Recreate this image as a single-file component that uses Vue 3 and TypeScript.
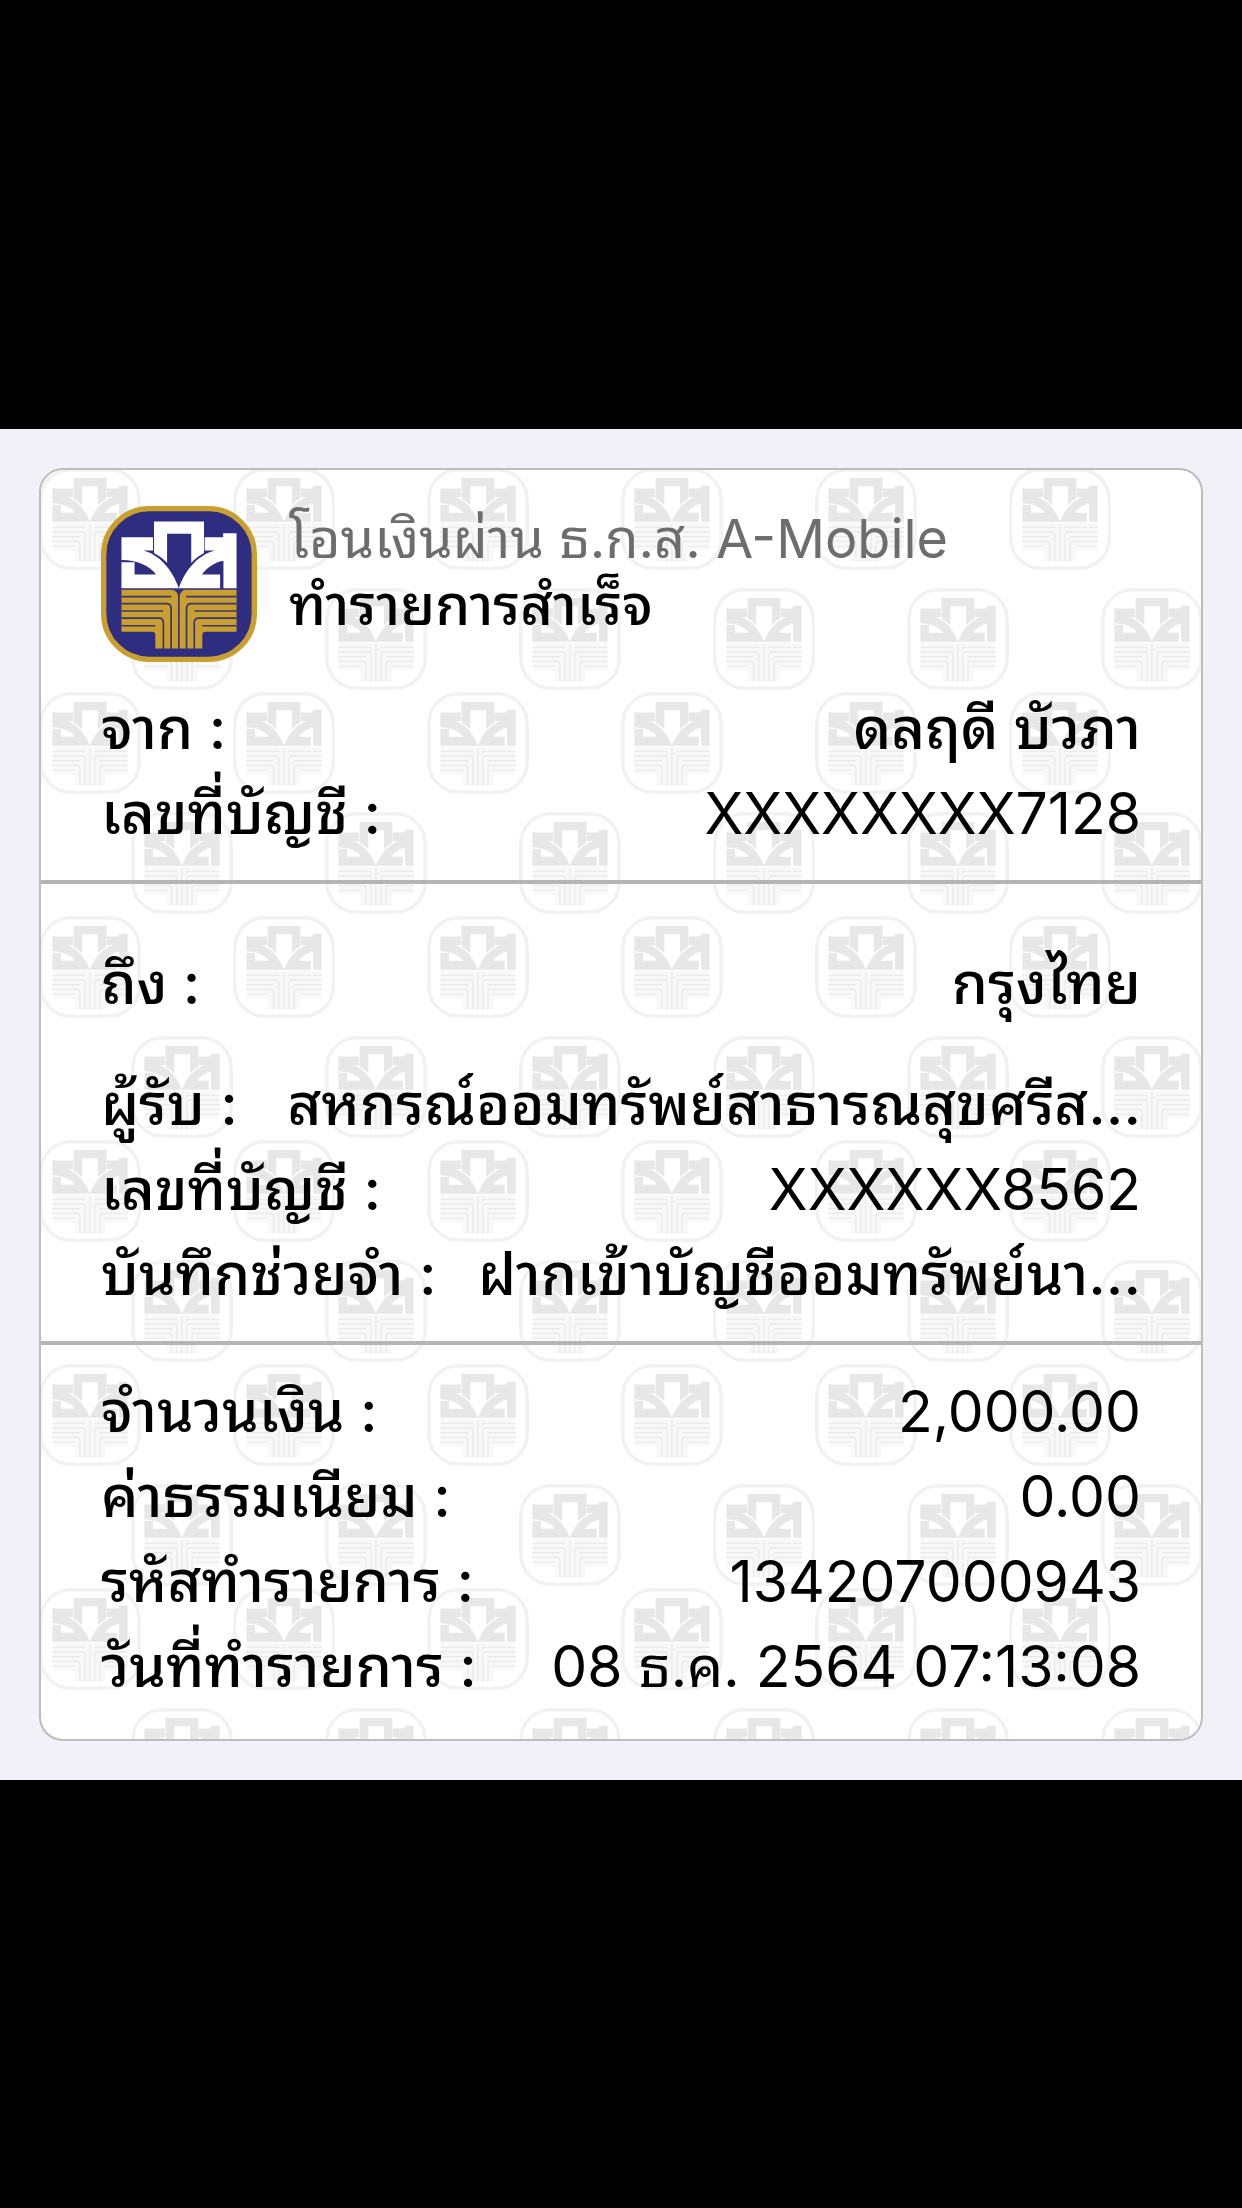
<script setup lang="ts">
interface Row {
  label: string
  value: string
  thai?: boolean
  spaced?: boolean
}

const sections: Row[][] = [
  [
    { label: 'จาก :', value: 'ดลฤดี บัวภา', thai: true },
    { label: 'เลขที่บัญชี :', value: 'XXXXXXXX7128' },
  ],
  [
    { label: 'ถึง :', value: 'กรุงไทย', thai: true, spaced: true },
    { label: 'ผู้รับ :', value: 'สหกรณ์ออมทรัพย์สาธารณสุขศรีส...', thai: true },
    { label: 'เลขที่บัญชี :', value: 'XXXXXX8562' },
    { label: 'บันทึกช่วยจำ :', value: 'ฝากเข้าบัญชีออมทรัพย์นา...', thai: true },
  ],
  [
    { label: 'จำนวนเงิน :', value: '2,000.00' },
    { label: 'ค่าธรรมเนียม :', value: '0.00' },
    { label: 'รหัสทำรายการ :', value: '134207000943' },
    { label: 'วันที่ทำรายการ :', value: '08 ธ.ค. 2564 07:13:08' },
  ],
]
</script>

<template>
  <main class="screen">
    <div class="panel">
      <article class="card">
        <svg class="watermark" aria-hidden="true">
          <defs>
            <symbol id="emblem" viewBox="0 0 465 465">
              <rect class="ring" x="8" y="8" width="449" height="449" rx="136" />
              <g transform="translate(-33 -47)">
                <path class="glyph" d="M94 140H188V180H160C205 192 245 235 265 292H94V215H133V251H197C178 224 140 209 94 208Z" />
                <path class="glyph" d="M342 140H397V128H437V292H398V210C368 215 345 235 334 251H388V292H265C285 235 325 192 372 180H342Z" />
                <path class="glyph" d="M191 93H340V187C325 195 312 205 302 217V130H230V217C220 205 206 195 191 187Z" />
                <path class="field" d="M230 216C245 235 258 258 265 285C272 258 287 235 302 216Z" />
                <path class="trunk" d="M94 297H437V422H345Q335 422 335 432V472H195V432Q195 422 185 422H94Z" />
                <path class="wedge" d="M244 296Q262 300 263 318H267Q268 300 286 296Z" />
                <path class="groove" d="M265 300V473M94 317H243M94 338H228Q242 338 242 353V473M94 360H218M94 381H206Q219 381 219 395V473M94 404H195M437 317H287M437 338H302Q288 338 288 353V473M437 360H312M437 381H324Q311 381 311 395V473M437 404H335" />
              </g>
            </symbol>
            <pattern id="tiles" x="-2" y="-2" width="194" height="224" patternUnits="userSpaceOnUse">
              <use href="#emblem" class="faint" x="0" y="0" width="102" height="102" />
              <use href="#emblem" class="faint" x="92" y="120" width="102" height="102" />
            </pattern>
          </defs>
          <rect width="100%" height="100%" fill="url(#tiles)" />
        </svg>

        <header class="head">
          <svg class="logo" role="img" aria-label="ธ.ก.ส."><use href="#emblem" width="100%" height="100%" /></svg>
          <div class="titles">
            <p class="via">โอนเงินผ่าน ธ.ก.ส. A-Mobile</p>
            <h1 class="status">ทำรายการสำเร็จ</h1>
          </div>
        </header>

        <dl v-for="(rows, i) in sections" :key="i" class="section">
          <div v-for="row in rows" :key="row.label" class="row" :class="{ spaced: row.spaced }">
            <dt>{{ row.label }}</dt>
            <dd :class="{ thai: row.thai }">{{ row.value }}</dd>
          </div>
        </dl>
      </article>
    </div>
  </main>
</template>

<style>
body {
  margin: 0;
  background: #000;
}
</style>

<style scoped>
.screen {
  min-height: 100vh;
  display: flex;
  flex-direction: column;
  justify-content: center;
  background: #000;
  color: #000;
  font-family: Inter, "Noto Sans Thai Looped", Loma, Garuda, "Noto Sans", sans-serif;
}
.panel {
  padding: 39px;
  background: #f2f1f7;
}
.card {
  position: relative;
  overflow: hidden;
  border: 2px solid #bdbdc0;
  border-radius: 24px;
  background: #fff;
}
.watermark {
  position: absolute;
  inset: 0;
  width: 100%;
  height: 100%;
}
.ring {
  fill: var(--field, #2f2d80);
  stroke: var(--ring, #c9a030);
  stroke-width: 16;
}
.field,
.wedge {
  fill: var(--field, #2f2d80);
}
.glyph {
  fill: var(--glyph, #fff);
}
.trunk {
  fill: var(--trunk, #c9a030);
}
.groove {
  fill: none;
  stroke: var(--groove, #3c3470);
  stroke-width: 5;
}
.faint {
  --field: #fff;
  --ring: #f2f2f2;
  --glyph: #e7e7e7;
  --trunk: #f8f8f8;
  --groove: #e8e8e8;
}
.head {
  position: relative;
  display: flex;
  gap: 32px;
  padding: 36px 60px 0;
}
.logo {
  flex: none;
  width: 156px;
  height: 156px;
}
.titles {
  min-width: 0;
}
.via,
.status {
  margin: 0;
  line-height: 66px;
  white-space: nowrap;
}
.via {
  font-size: 54px;
  font-weight: 400;
  color: #6d6d6d;
}
.status {
  font-size: 56px;
  font-weight: 500;
}
.section {
  position: relative;
  margin: 0;
  padding: 24px 60px;
}
.section + .section {
  border-top: 4px solid #b5b5b5;
}
.section:nth-of-type(2) {
  padding-top: 57px;
}
.section:last-child {
  padding-bottom: 30px;
}
.row {
  display: flex;
  justify-content: space-between;
  align-items: baseline;
  font-size: 57px;
  line-height: 85px;
  white-space: nowrap;
}
.row.spaced {
  margin-bottom: 36px;
}
dt,
.thai {
  font-size: 58px;
  font-weight: 500;
}
dd {
  margin: 0;
}
</style>
